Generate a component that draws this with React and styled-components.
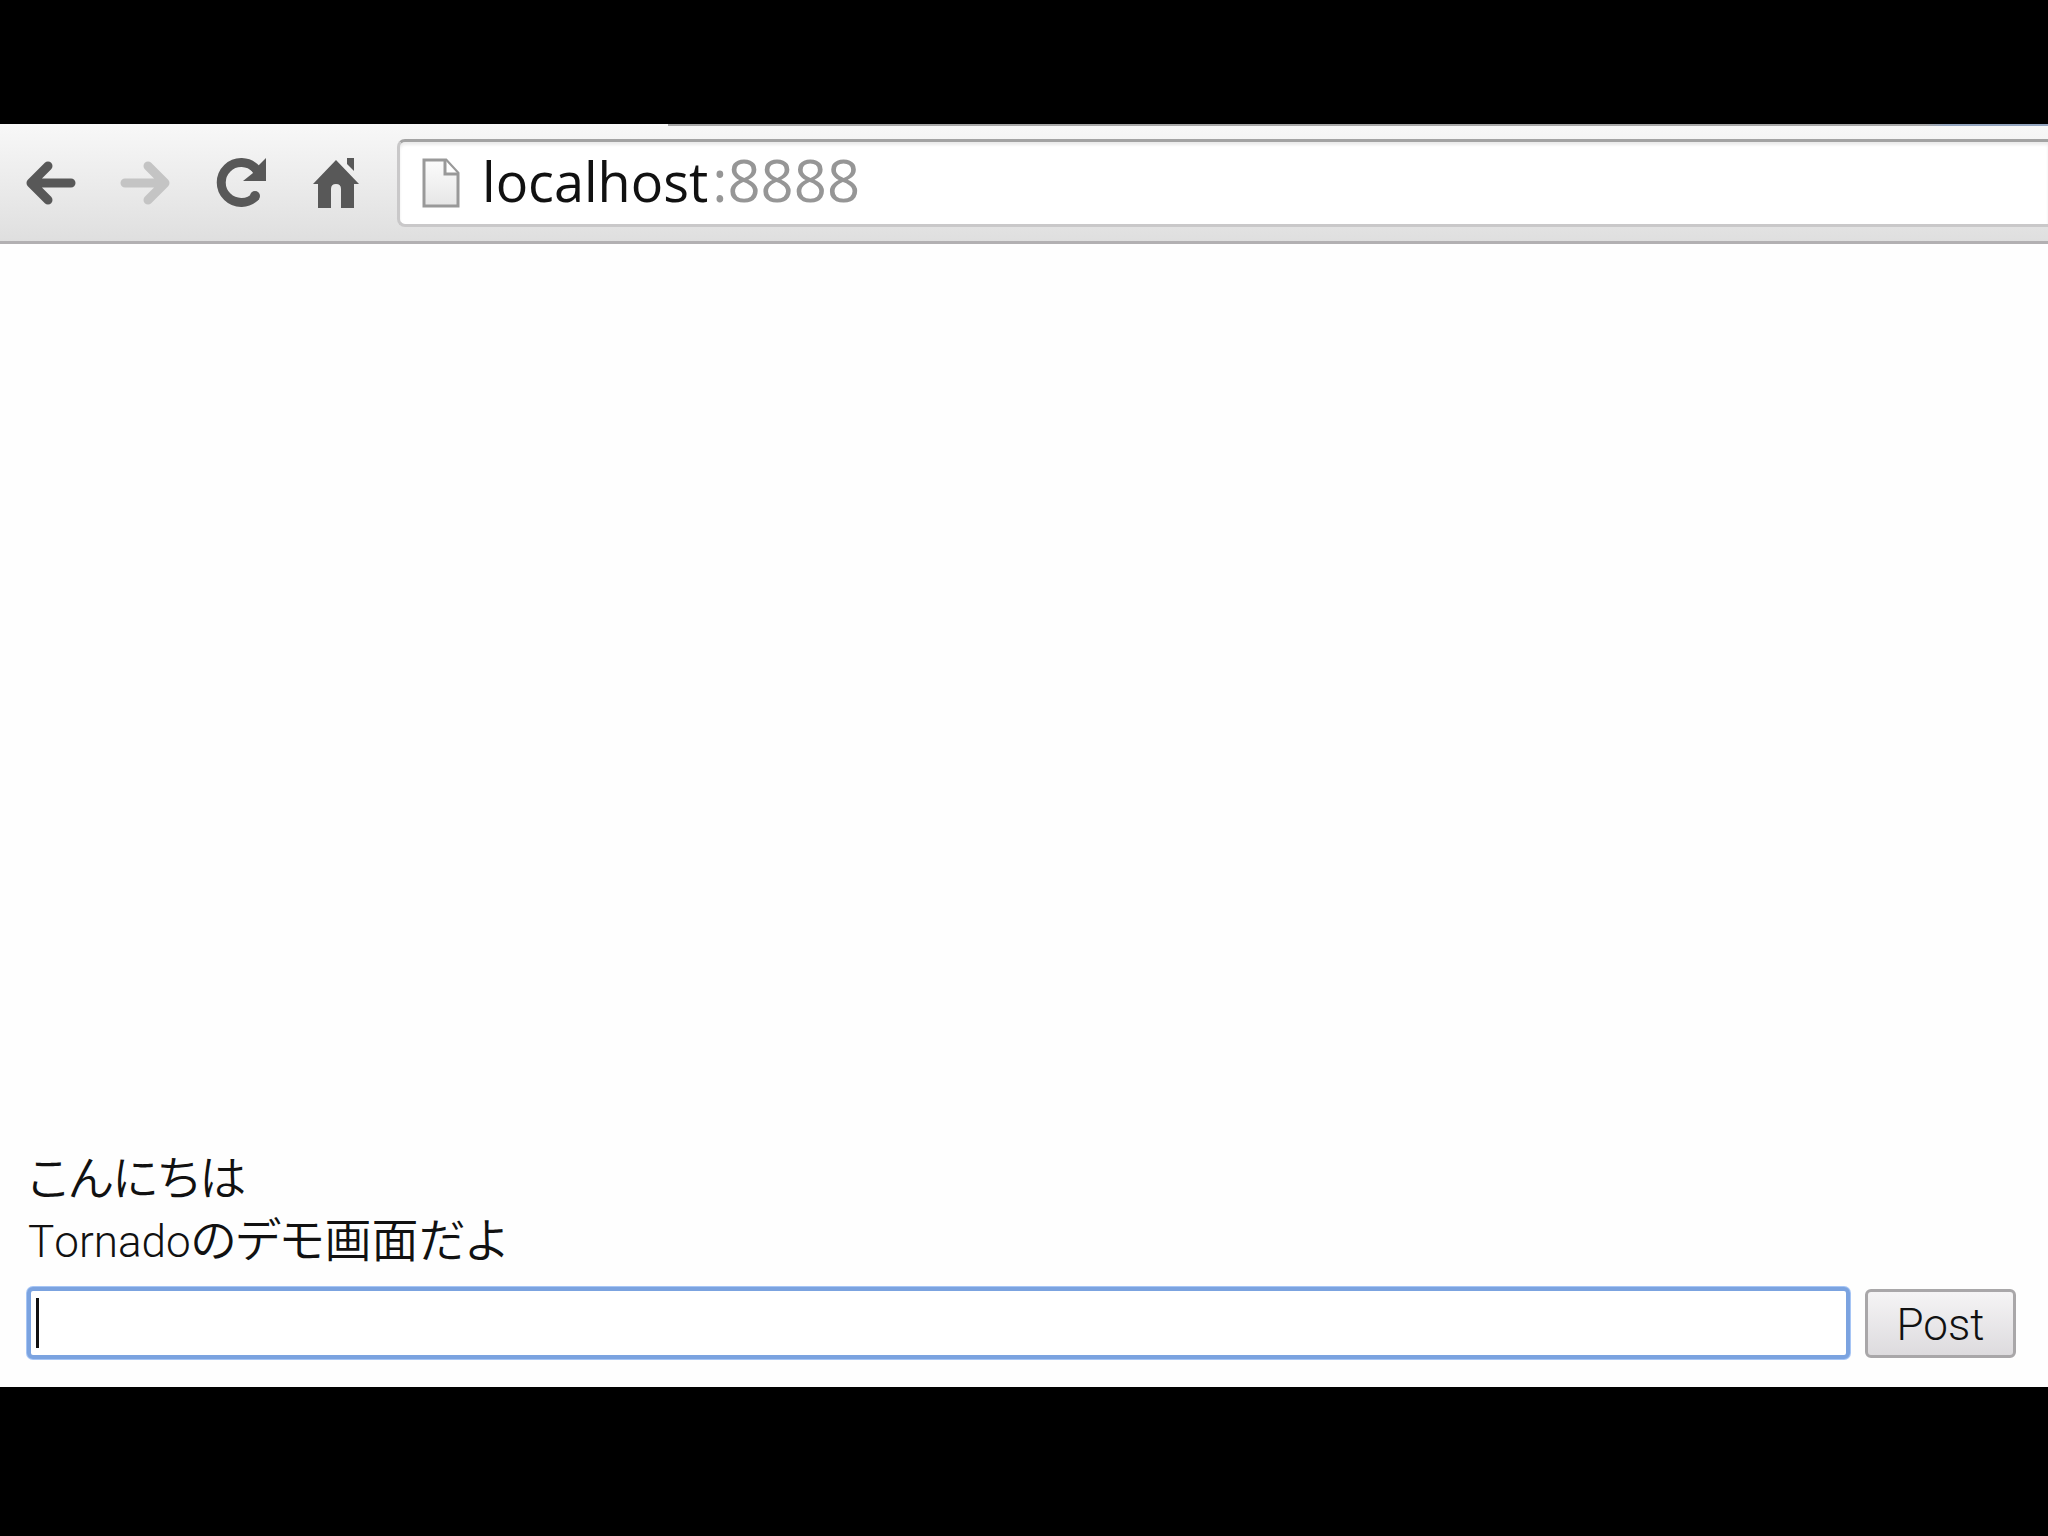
import React from "react";
import styled, { createGlobalStyle } from "styled-components";

const GlobalStyle = createGlobalStyle`
  * { box-sizing: border-box; }
  body { margin: 0; background: #000; }
`;

const Screen = styled.div`
  display: flex;
  flex-direction: column;
  min-height: 100vh;
  padding: 124px 0 149px;
  background: #000;
`;

const Toolbar = styled.header`
  display: flex;
  align-items: center;
  height: 120px;
  padding: 1px 0 0 22px;
  border-bottom: 3px solid #b2b0b2;
  background:
    linear-gradient(90deg, transparent 668px, #a8a8a8 668px, #a8a8a8 94%, #93a5bf 95%) top / 100% 2px no-repeat,
    linear-gradient(#f8f8f8, #dfdfdf);
`;

const Nav = styled.nav`
  display: flex;
  gap: 39px;
  margin-right: 34px;
`;

const NavButton = styled.button`
  display: flex;
  width: 56px;
  height: 56px;
  padding: 0;
  border: 0;
  background: none;
  color: ${(p) => (p.disabled ? "#c4c4c4" : "#585858")};
`;

const Omnibox = styled.div`
  display: flex;
  flex: 1;
  align-items: center;
  gap: 22px;
  height: 88px;
  padding-left: 22px;
  border: 3px solid #c9c8c9;
  border-top-color: #a3a3a3;
  border-right: 0;
  border-radius: 8px 0 0 8px;
  background: #fff;
  box-shadow: inset 0 3px 3px #ececec;
`;

const Address = styled.div`
  padding-bottom: 4px;
  font: 400 54px/76px "Open Sans", "Noto Sans", sans-serif;
  color: #111;
  outline: none;
`;

const Port = styled.span`
  padding-left: 4px;
  font-size: 58px;
  line-height: 1;
  color: #969696;
`;

const Page = styled.main`
  display: flex;
  flex: 1;
  flex-direction: column;
  justify-content: flex-end;
  padding: 0 32px 27px 26px;
  background: #fefefe;
`;

const Messages = styled.div`
  padding-left: 2px;
  margin-bottom: 13px;
  font: 350 47px/62px "Noto Sans CJK JP", sans-serif;
  font-feature-settings: "palt";
  color: #111;
`;

const Message = styled.p`
  margin: 0;
`;

const Latin = styled.span`
  font-family: Roboto, sans-serif;
  font-size: 44px;
  font-kerning: none;
`;

const PostForm = styled.form`
  display: flex;
  align-items: center;
  gap: 14px;
`;

const Field = styled.div`
  position: relative;
  flex: 1;
`;

const MessageInput = styled.input`
  display: block;
  width: 100%;
  height: 74px;
  padding: 0 8px;
  border: 2px solid #a6c5f5;
  border-radius: 7px;
  outline: 4px solid #7ba3e0;
  outline-offset: -5px;
  background: #fff;
  font: 350 44px Roboto, "Noto Sans CJK JP", sans-serif;
`;

const Caret = styled.span`
  position: absolute;
  top: 12px;
  left: 10px;
  width: 3px;
  height: 50px;
  background: #111;
`;

const PostButton = styled.button`
  width: 151px;
  height: 69px;
  padding: 4px 0 0;
  border: 3px solid #a9a7a9;
  border-radius: 6px;
  background: linear-gradient(#f5f4f5, #dddbde);
  font: 350 44px Roboto, sans-serif;
  color: #111;
`;

const Icon = ({ children, width = 56 }) => (
  <svg width={width} height="56" viewBox={`0 0 ${width} 56`} fill="none" aria-hidden="true">
    {children}
  </svg>
);

const BackIcon = () => (
  <Icon>
    <path d="M26 11 9 28l17 17M11 28h38" stroke="currentColor" strokeWidth="9" strokeLinecap="round" strokeLinejoin="round" />
  </Icon>
);

const ForwardIcon = () => (
  <Icon>
    <path d="m31 11 17 17-17 17M46 28H8" stroke="currentColor" strokeWidth="9" strokeLinecap="round" strokeLinejoin="round" />
  </Icon>
);

const ReloadIcon = () => (
  <Icon>
    <path d="M44 14A20 20 0 1 0 44 41" stroke="currentColor" strokeWidth="9" />
    <circle cx="43" cy="41" r="5" fill="currentColor" />
    <path d="M54 3v23H31l10-8-3-6 8-1z" fill="currentColor" />
  </Icon>
);

const HomeIcon = () => (
  <Icon>
    <path d="M29 5 52 29h-5v24H34V34q0-5-5-5t-5 5v19H11V29H6z" fill="currentColor" />
    <path d="M40 3h7v13l-7-7z" fill="currentColor" />
  </Icon>
);

const FileIcon = () => (
  <Icon width={38}>
    <defs>
      <linearGradient id="sheet" x1="0" y1="0" x2="0" y2="1">
        <stop stopColor="#fcfcfc" />
        <stop offset="1" stopColor="#e6e6e6" />
      </linearGradient>
    </defs>
    <path d="M2 5h22l12 13v33H2z" fill="url(#sheet)" stroke="#999" strokeWidth="3" />
    <path d="M23 5v14h13" fill="#fff" stroke="#999" strokeWidth="3" />
  </Icon>
);

export default function App() {
  return (
    <Screen>
      <GlobalStyle />
      <Toolbar>
        <Nav aria-label="Browser">
          <NavButton type="button" aria-label="Back"><BackIcon /></NavButton>
          <NavButton type="button" aria-label="Forward" disabled><ForwardIcon /></NavButton>
          <NavButton type="button" aria-label="Reload"><ReloadIcon /></NavButton>
          <NavButton type="button" aria-label="Home"><HomeIcon /></NavButton>
        </Nav>
        <Omnibox>
          <FileIcon />
          <Address role="textbox" aria-label="Address" tabIndex={0}>
            localhost<Port>:8888</Port>
          </Address>
        </Omnibox>
      </Toolbar>
      <Page lang="ja">
        <Messages>
          <Message>こんにちは</Message>
          <Message><Latin>Tornado</Latin>のデモ画面だよ</Message>
        </Messages>
        <PostForm onSubmit={(e) => e.preventDefault()}>
          <Field>
            <MessageInput type="text" aria-label="Message" />
            <Caret />
          </Field>
          <PostButton type="submit">Post</PostButton>
        </PostForm>
      </Page>
    </Screen>
  );
}
